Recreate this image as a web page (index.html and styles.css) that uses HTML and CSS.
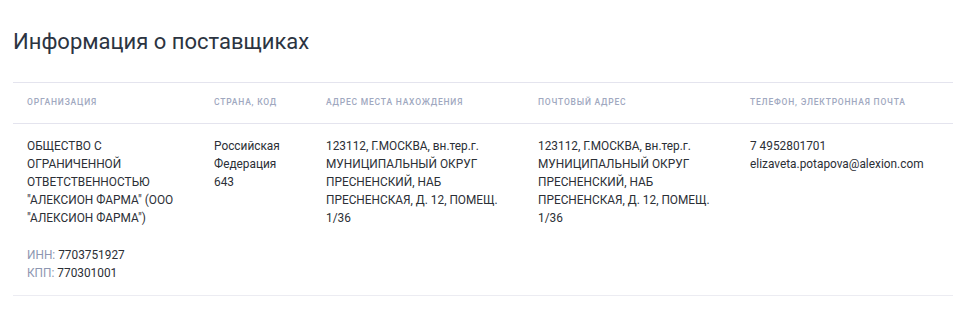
FILE: index.html
```html
<!DOCTYPE html>
<html lang="ru">
<head>
  <meta charset="UTF-8" />
  <meta name="viewport" content="width=device-width, initial-scale=1.0" />
  <title>Информация о поставщиках</title>
  <link rel="stylesheet" href="styles.css">
</head>
<body>
  <div class="section">
    <h2>Информация о поставщиках</h2>
    <table class="suppliers">
      <thead>
        <tr>
          <th class="col-org">Организация</th>
          <th class="col-country">Страна, код</th>
          <th class="col-addr">Адрес места нахождения</th>
          <th class="col-addr">Почтовый адрес</th>
          <th>Телефон, электронная почта</th>
        </tr>
      </thead>
      <tbody>
        <tr>
          <td>
            <div>ОБЩЕСТВО С ОГРАНИЧЕННОЙ ОТВЕТСТВЕННОСТЬЮ "АЛЕКСИОН ФАРМА" (ООО "АЛЕКСИОН ФАРМА")</div>
            <div class="codes">
              <div><span class="muted">ИНН:</span> 7703751927</div>
              <div><span class="muted">КПП:</span> 770301001</div>
            </div>
          </td>
          <td>
            <div>Российская Федерация</div>
            <div>643</div>
          </td>
          <td>123112, Г.МОСКВА, вн.тер.г. МУНИЦИПАЛЬНЫЙ ОКРУГ ПРЕСНЕНСКИЙ, НАБ ПРЕСНЕНСКАЯ, Д. 12, ПОМЕЩ. 1/36</td>
          <td>123112, Г.МОСКВА, вн.тер.г. МУНИЦИПАЛЬНЫЙ ОКРУГ ПРЕСНЕНСКИЙ, НАБ ПРЕСНЕНСКАЯ, Д. 12, ПОМЕЩ. 1/36</td>
          <td>
            <div>7 4952801701</div>
            <div>elizaveta.potapova@alexion.com</div>
          </td>
        </tr>
      </tbody>
    </table>
  </div>
</body>
</html>
```

FILE: styles.css
```css
body {
  margin: 0;
  font-family: Roboto, "Liberation Sans", sans-serif;
  color: #2b2f36;
  background: #fff;
}

.section {
  padding: 0 0 0 13px;
}

h2 {
  margin: 0;
  padding: 28px 0 26px;
  font-size: 22px;
  font-weight: 400;
  line-height: 28px;
  color: #2c3441;
}

.suppliers {
  width: 100%;
  border-collapse: collapse;
  table-layout: fixed;
}

.suppliers th {
  height: 38px;
  padding: 0 14px 2px;
  border-top: 1px solid #e4e4ee;
  border-bottom: 1px solid #e4e4ee;
  text-align: left;
  font-size: 8.5px;
  font-weight: 500;
  letter-spacing: 0.8px;
  text-transform: uppercase;
  color: #a0a8c0;
}

.col-org { width: 159px; }
.col-country { width: 84px; }
.col-addr { width: 184px; }

.suppliers td {
  padding: 13px 14px 13px;
  border-bottom: 1px solid #ececf2;
  vertical-align: top;
  font-size: 11.85px;
  line-height: 18px;
}

.codes {
  margin-top: 19px;
}

.muted {
  color: #8d96b1;
}
```
